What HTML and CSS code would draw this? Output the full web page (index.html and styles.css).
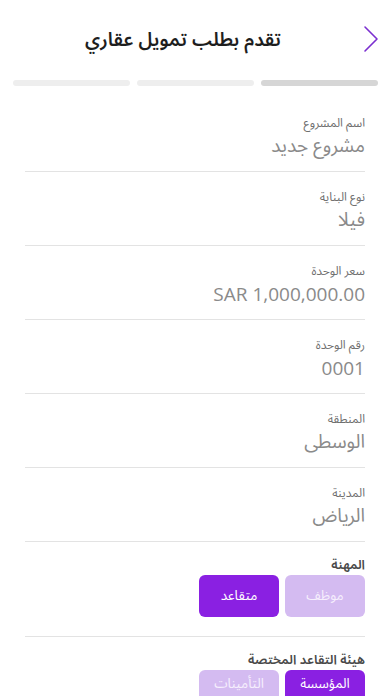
FILE: index.html
```html
<!DOCTYPE html>
<html lang="ar" dir="rtl">
<head>
<meta charset="utf-8">
<title>تقدم بطلب تمويل عقاري</title>
<link rel="stylesheet" href="styles.css">
</head>
<body>
<div class="screen">
  <header class="topbar">
    <button class="back" aria-label="رجوع">
      <svg width="16" height="28" viewBox="0 0 16 28"><path d="M2 2 L14 14 L2 26" fill="none" stroke="#7b2fd0" stroke-width="1.6" stroke-linecap="round" stroke-linejoin="round"/></svg>
    </button>
    <h1 class="title">تقدم بطلب تمويل عقاري</h1>
  </header>
  <div class="progress">
    <span class="seg seg-done"></span>
    <span class="seg"></span>
    <span class="seg"></span>
  </div>
  <main class="form">
    <div class="field">
      <div class="label">اسم المشروع</div>
      <div class="value">مشروع جديد</div>
    </div>
    <div class="field">
      <div class="label">نوع البناية</div>
      <div class="value">فيلا</div>
    </div>
    <div class="field">
      <div class="label">سعر الوحدة</div>
      <div class="value ltr">SAR 1,000,000.00</div>
    </div>
    <div class="field">
      <div class="label">رقم الوحدة</div>
      <div class="value ltr">0001</div>
    </div>
    <div class="field">
      <div class="label">المنطقة</div>
      <div class="value">الوسطى</div>
    </div>
    <div class="field">
      <div class="label">المدينة</div>
      <div class="value">الرياض</div>
    </div>
    <div class="choice">
      <div class="choice-label">المهنة</div>
      <div class="options">
        <button class="opt">موظف</button>
        <button class="opt opt-active">متقاعد</button>
      </div>
    </div>
    <div class="choice">
      <div class="choice-label">هيئة التقاعد المختصة</div>
      <div class="options">
        <button class="opt opt-active opt-tall">المؤسسة العامة للتقاعد</button>
        <button class="opt opt-tall">التأمينات الاجتماعية</button>
      </div>
    </div>
  </main>
</div>
</body>
</html>
```
FILE: styles.css
```css
html, body {
  margin: 0;
  padding: 0;
  background: #ffffff;
}
body {
  font-family: "Noto Sans Arabic", "DejaVu Sans", "Noto Sans", sans-serif;
  direction: rtl;
  width: 392px;
  height: 696px;
  overflow: hidden;
}
.screen {
  width: 392px;
}
.topbar {
  position: relative;
  height: 80px;
  display: flex;
  align-items: center;
  justify-content: center;
}
.back {
  position: absolute;
  right: 13px;
  top: 25px;
  border: 0;
  background: none;
  padding: 0;
  width: 16px;
  height: 28px;
  display: flex;
}
.title {
  margin: 0 26px 0 0;
  font-size: 19px;
  line-height: 26px;
  font-weight: 600;
  color: #1e1e1e;
}
.progress {
  display: flex;
  gap: 7px;
  padding: 0 14px 0 13px;
}
.seg {
  flex: 1;
  height: 6px;
  border-radius: 3px;
  background: #eeeeee;
}
.seg-done {
  background: #d6d6d6;
}
.form {
  padding: 12px 27px 0 25px;
}
.field {
  padding: 17px 0 11px;
  border-bottom: 1px solid #e3e3e3;
}
.label {
  font-size: 12px;
  line-height: 18px;
  color: #6f6f6f;
}
.value {
  font-size: 19px;
  line-height: 27px;
  color: #8a8a8a;
}
.ltr {
  font-family: "Open Sans", "Noto Sans", sans-serif;
}
.choice {
  padding: 14px 0 19px;
  border-bottom: 1px solid #e3e3e3;
}
.choice-label {
  font-size: 13px;
  line-height: 18px;
  font-weight: 600;
  color: #4a4a4a;
}
.options {
  margin-top: 1px;
  display: flex;
  gap: 6px;
}
.opt {
  width: 80px;
  height: 42px;
  border: 0;
  border-radius: 6px;
  background: #d4bbf1;
  color: #f6effd;
  font-family: inherit;
  font-size: 13.5px;
  line-height: 18px;
  padding: 0 6px;
}
.opt-active {
  background: #8a20e2;
  color: #ffffff;
}
.opt-tall {
  height: 48px;
  padding-top: 5px;
  display: flex;
  align-items: flex-start;
  justify-content: center;
  text-align: center;
}
```
